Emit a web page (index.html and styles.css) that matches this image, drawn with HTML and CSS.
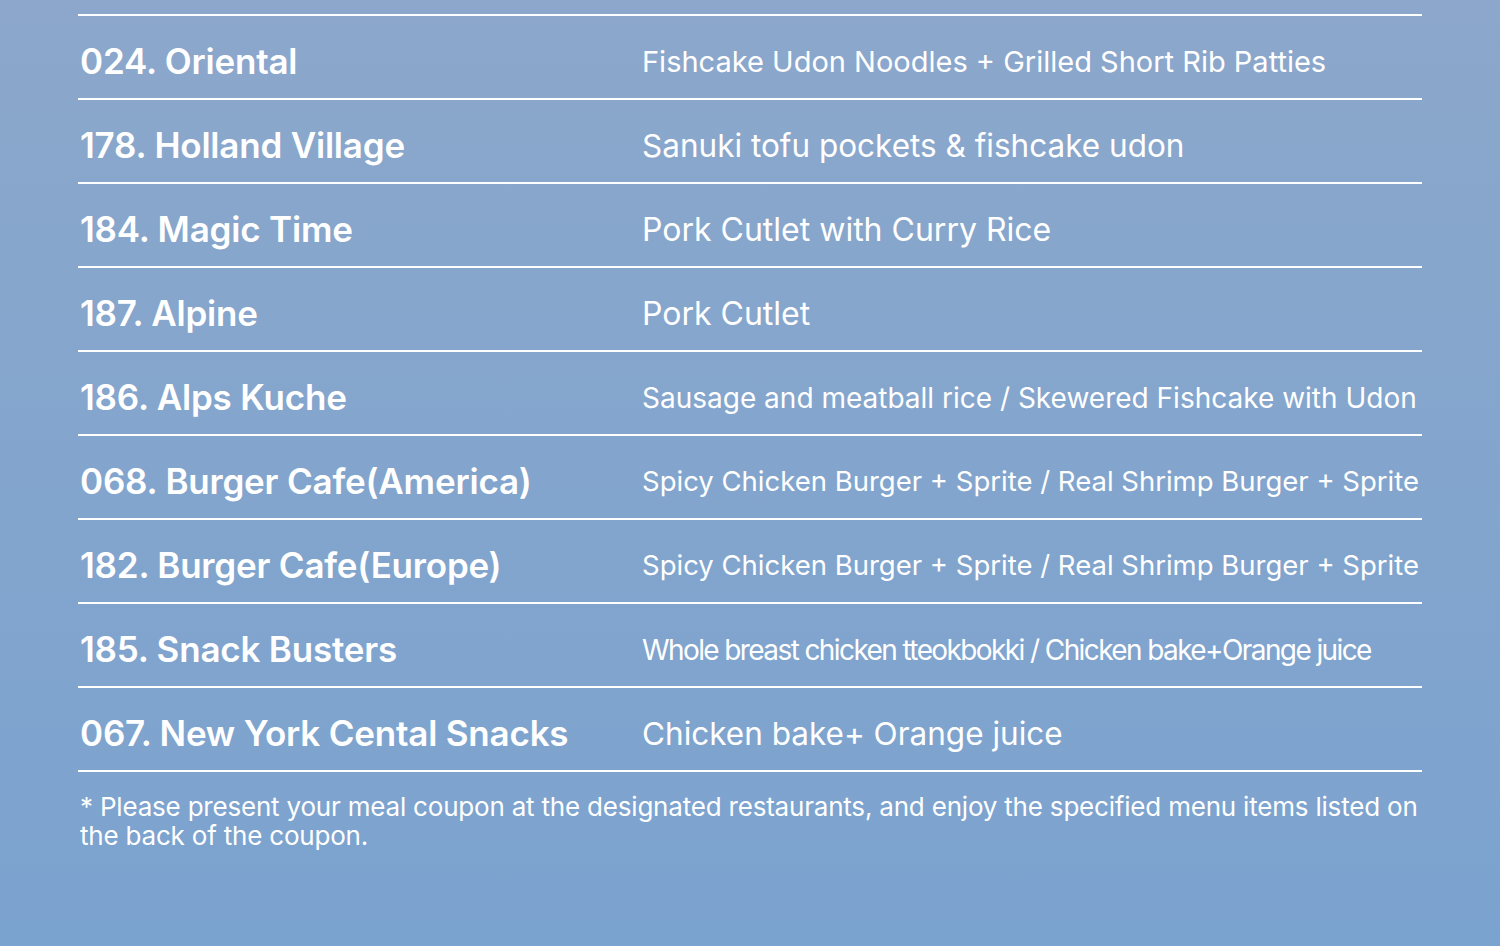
FILE: index.html
```html
<!DOCTYPE html>
<html lang="en">
<head>
<meta charset="utf-8">
<title>Meal coupon restaurants</title>
<link rel="stylesheet" href="styles.css">
</head>
<body>
<main class="page">
  <ul class="list">
    <li class="row"><span class="name">024. Oriental</span><span class="menu s29">Fishcake Udon Noodles + Grilled Short Rib Patties</span></li>
    <li class="row"><span class="name">178. Holland Village</span><span class="menu s31">Sanuki tofu pockets &amp; fishcake udon</span></li>
    <li class="row"><span class="name">184. Magic Time</span><span class="menu s32">Pork Cutlet with Curry Rice</span></li>
    <li class="row"><span class="name">187. Alpine</span><span class="menu s32">Pork Cutlet</span></li>
    <li class="row"><span class="name">186. Alps Kuche</span><span class="menu s28">Sausage and meatball rice / Skewered Fishcake with Udon</span></li>
    <li class="row"><span class="name">068. Burger Cafe(America)</span><span class="menu s27">Spicy Chicken Burger + Sprite / Real Shrimp Burger + Sprite</span></li>
    <li class="row"><span class="name">182. Burger Cafe(Europe)</span><span class="menu s27">Spicy Chicken Burger + Sprite / Real Shrimp Burger + Sprite</span></li>
    <li class="row"><span class="name">185. Snack Busters</span><span class="menu s28 tight">Whole breast chicken tteokbokki / Chicken bake+Orange juice</span></li>
    <li class="row"><span class="name">067. New York Cental Snacks</span><span class="menu s31">Chicken bake+ Orange juice</span></li>
  </ul>
  <p class="note">* Please present your meal coupon at the designated restaurants, and enjoy the specified menu items listed on the back of the coupon.</p>
</main>
</body>
</html>
```

FILE: styles.css
```css
html, body {
  margin: 0;
  height: 100%;
}
body {
  background: linear-gradient(180deg, #8ca7cb 0%, #83a5cd 50%, #7ba3cf 100%);
  color: #ffffff;
  font-family: "Inter", "Liberation Sans", sans-serif;
  overflow: hidden;
}
.page {
  width: 1344px;
  margin: 0 auto;
  padding-top: 14px;
}
.list {
  list-style: none;
  margin: 0;
  padding: 0;
  border-bottom: 2px solid #ffffff;
}
.row {
  display: grid;
  grid-template-columns: 564px 1fr;
  align-items: center;
  height: 82px;
  border-top: 2px solid #ffffff;
}
.name {
  padding-left: 2px;
  padding-top: 9px;
  font-size: 35px;
  font-weight: 600;
  line-height: 1;
  letter-spacing: -0.2px;
  white-space: nowrap;
}
.menu {
  padding-top: 9px;
  line-height: 1;
  font-weight: 400;
  white-space: nowrap;
}
.s27 { font-size: 27.5px; }
.s28 { font-size: 28px; }
.s29 { font-size: 29px; }
.s31 { font-size: 31.5px; }
.s32 { font-size: 32px; }
.tight { letter-spacing: -1.6px; }
.note {
  margin: 20px 0 0 2px;
  font-size: 26px;
  line-height: 29px;
  font-weight: 400;
  letter-spacing: -0.2px;
}
```
